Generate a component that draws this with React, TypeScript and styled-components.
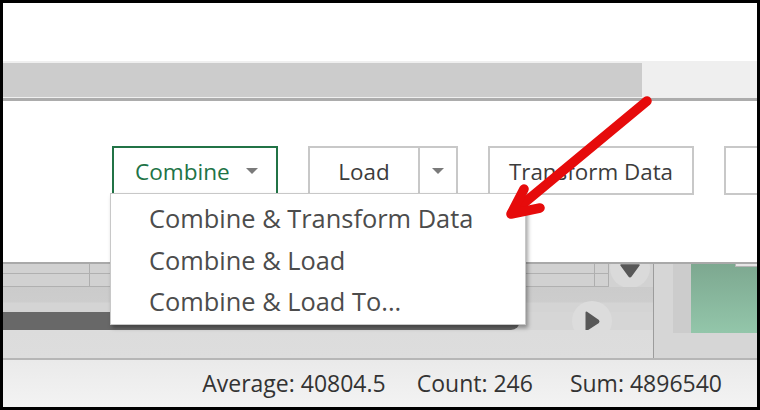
import React from "react";
import styled, { createGlobalStyle } from "styled-components";

const GlobalStyle = createGlobalStyle`
  *, *::before, *::after {
    box-sizing: border-box;
  }
  html, body {
    margin: 0;
    padding: 0;
    background: #fff;
  }
  body {
    font-family: "Open Sans", "Noto Sans", sans-serif;
  }
`;

const menuItems = [
  "Combine & Transform Data",
  "Combine & Load",
  "Combine & Load To...",
];

const stats = [
  { label: "Average: 40804.5", gap: 0 },
  { label: "Count: 246", gap: 31 },
  { label: "Sum: 4896540", gap: 37 },
];

const App = () => {
  return (
    <>
      <GlobalStyle />
      <Frame>
        <TopBlank />
        <TabBar>
          <GrayTab />
        </TabBar>

        <Panel>
          <Toolbar>
            <CombineButton>
              <span>Combine</span>
              <Caret />
            </CombineButton>
            <SplitButton>
              <SplitMain>Load</SplitMain>
              <SplitDrop>
                <Caret />
              </SplitDrop>
            </SplitButton>
            <PlainButton $width={206}>Transform Data</PlainButton>
            <PlainButton $width={120} />
          </Toolbar>
        </Panel>

        <GridArea>
          <LeftPane>
            <HeaderRows>
              <Cells>
                <CellRow $height={9}>
                  <Cell $width={87} />
                  <Cell $width={505} />
                  <Cell $width={14} />
                </CellRow>
                <CellRow $height={12}>
                  <Cell $width={87} />
                  <Cell $width={505} />
                  <Cell $width={14} />
                </CellRow>
              </Cells>
              <DownZone>
                <svg width="44" height="34" viewBox="0 0 44 34">
                  <circle cx="21" cy="4" r="20" fill="#dadada" />
                  <path
                    d="M12 1 L30 1 L22 12 Q21 13.5 20 12 Z"
                    fill="#585858"
                    stroke="#585858"
                    strokeWidth="1.5"
                    strokeLinejoin="round"
                  />
                </svg>
              </DownZone>
            </HeaderRows>
            <MidBand />
            <ScrollRow>
              <Thumb />
              <RightZone>
                <svg width="46" height="44" viewBox="0 0 46 44">
                  <circle cx="22" cy="22" r="20" fill="#dcdcdc" />
                  <path
                    d="M16.5 13.5 L28 21.5 Q29 22.5 28 23.5 L16.5 31 Z"
                    fill="#585858"
                    stroke="#585858"
                    strokeWidth="2"
                    strokeLinejoin="round"
                  />
                </svg>
              </RightZone>
            </ScrollRow>
            <BottomBand />
          </LeftPane>
          <RightPane>
            <Strip />
            <Preview>
              <Notch />
            </Preview>
          </RightPane>
        </GridArea>

        <StatusBar>
          {stats.map((s) => (
            <StatusItem key={s.label} $gap={s.gap}>
              {s.label}
            </StatusItem>
          ))}
        </StatusBar>

        <Menu>
          {menuItems.map((item) => (
            <MenuItem key={item}>{item}</MenuItem>
          ))}
        </Menu>

        <ArrowLayer viewBox="0 0 760 410" width="760" height="410">
          <g
            stroke="#e60b0b"
            strokeWidth="9.5"
            strokeLinecap="round"
            strokeLinejoin="round"
            fill="none"
          >
            <path d="M647 101 L512 213" />
            <path d="M524 189 L511 214 L540 208" />
          </g>
        </ArrowLayer>
      </Frame>
    </>
  );
};

const Frame = styled.div`
  position: relative;
  width: 760px;
  height: 410px;
  border: 3px solid #000;
  display: flex;
  flex-direction: column;
  overflow: hidden;
  background: #fff;
`;

const TopBlank = styled.div`
  height: 58px;
  flex-shrink: 0;
`;

const TabBar = styled.div`
  height: 40px;
  flex-shrink: 0;
  padding: 2px 0 1px;
  background: #efefef;
  border-bottom: 3px solid #acacac;
`;

const GrayTab = styled.div`
  width: 639px;
  height: 34px;
  background: #cccccc;
`;

const Panel = styled.div`
  height: 161px;
  flex-shrink: 0;
  padding: 45px 0 0 109px;
  overflow: hidden;
`;

const Toolbar = styled.div`
  display: flex;
  gap: 30px;
`;

const Caret = styled.span`
  width: 0;
  height: 0;
  border-left: 6px solid transparent;
  border-right: 6px solid transparent;
  border-top: 6px solid #7a7a7a;
`;

const CombineButton = styled.div`
  flex-shrink: 0;
  width: 166px;
  height: 49px;
  border: 2px solid #217346;
  display: flex;
  align-items: center;
  justify-content: space-between;
  padding: 1px 18px 0 21px;
  font-size: 22.6px;
  color: #217346;
`;

const SplitButton = styled.div`
  flex-shrink: 0;
  width: 150px;
  height: 49px;
  border: 2px solid #c8c8c8;
  display: flex;
`;

const SplitMain = styled.div`
  width: 108px;
  display: flex;
  align-items: center;
  justify-content: center;
  padding-top: 1px;
  font-size: 22.4px;
  color: #3c3c3c;
`;

const SplitDrop = styled.div`
  flex: 1;
  border-left: 2px solid #c8c8c8;
  display: flex;
  align-items: center;
  justify-content: center;
`;

const PlainButton = styled.div<{ $width: number }>`
  flex-shrink: 0;
  width: ${(p) => p.$width}px;
  height: 49px;
  border: 2px solid #c8c8c8;
  display: flex;
  align-items: center;
  justify-content: center;
  padding-top: 1px;
  font-size: 22.4px;
  color: #3c3c3c;
`;

const GridArea = styled.div`
  height: 96px;
  flex-shrink: 0;
  display: flex;
  border-top: 2px solid #a9a9a9;
`;

const LeftPane = styled.div`
  width: 650px;
  display: flex;
  flex-direction: column;
  background: #d2d2d2;
`;

const HeaderRows = styled.div`
  display: flex;
  height: 23px;
`;

const Cells = styled.div`
  width: 606px;
  display: flex;
  flex-direction: column;
`;

const CellRow = styled.div<{ $height: number }>`
  display: flex;
  height: ${(p) => p.$height + 1}px;
  border-bottom: 1px solid #b0b0b0;
  background: #d1d1d1;
`;

const Cell = styled.div<{ $width: number }>`
  width: ${(p) => p.$width}px;
  border-right: 1px solid #aeaeae;
`;

const DownZone = styled.div`
  flex: 1;
  height: 23px;
  overflow: visible;
  svg {
    display: block;
  }
`;

const MidBand = styled.div`
  height: 25px;
  background: linear-gradient(#cbcbcb 0%, #cdcdcd 60%, #d4d4d4 64%, #d4d4d4 100%);
`;

const ScrollRow = styled.div`
  height: 18px;
  display: flex;
  align-items: center;
  background: #d6d6d6;
`;

const Thumb = styled.div`
  width: 517px;
  height: 18px;
  background: #686868;
  border-radius: 0 9px 9px 0;
`;

const RightZone = styled.div`
  margin: -13px 0 -13px 50px;
  svg {
    display: block;
  }
`;

const BottomBand = styled.div`
  flex: 1;
  background: linear-gradient(#dcdcdc, #dddddd);
`;

const RightPane = styled.div`
  flex: 1;
  display: flex;
  align-items: flex-start;
  padding-left: 19px;
  background: #d6d6d6;
  border-left: 1px solid #9c9c9c;
`;

const Strip = styled.div`
  width: 18px;
  height: 69px;
  background: #cccccc;
`;

const Preview = styled.div`
  flex: 1;
  height: 69px;
  display: flex;
  justify-content: flex-end;
  align-items: flex-start;
  background: linear-gradient(#7da890, #93c6aa);
`;

const Notch = styled.div`
  width: 22px;
  height: 3px;
  background: #e6e6e6;
  border-left: 1px solid #b4b4b4;
  border-bottom: 1px solid #b4b4b4;
`;

const StatusBar = styled.div`
  flex: 1;
  display: flex;
  align-items: center;
  justify-content: flex-end;
  padding: 0 35px 1px 0;
  border-top: 2px solid #b6b6b6;
  background: linear-gradient(#eaeaea, #f3f3f3);
`;

const StatusItem = styled.span<{ $gap: number }>`
  margin-left: ${(p) => p.$gap}px;
  font-size: 23px;
  color: #333;
  white-space: nowrap;
`;

const Menu = styled.div`
  position: absolute;
  left: 107px;
  top: 190px;
  width: 416px;
  padding: 4px 0 1px;
  background: #fff;
  border: 1px solid #c8c8c8;
  box-shadow: 2px 3px 4px rgba(0, 0, 0, 0.35);
`;

const MenuItem = styled.div`
  height: 41.5px;
  line-height: 41.5px;
  padding-left: 38px;
  font-size: 25.4px;
  color: #4c4c4c;
  white-space: nowrap;
`;

const ArrowLayer = styled.svg`
  position: absolute;
  left: -3px;
  top: -3px;
  pointer-events: none;
`;

export default App;
